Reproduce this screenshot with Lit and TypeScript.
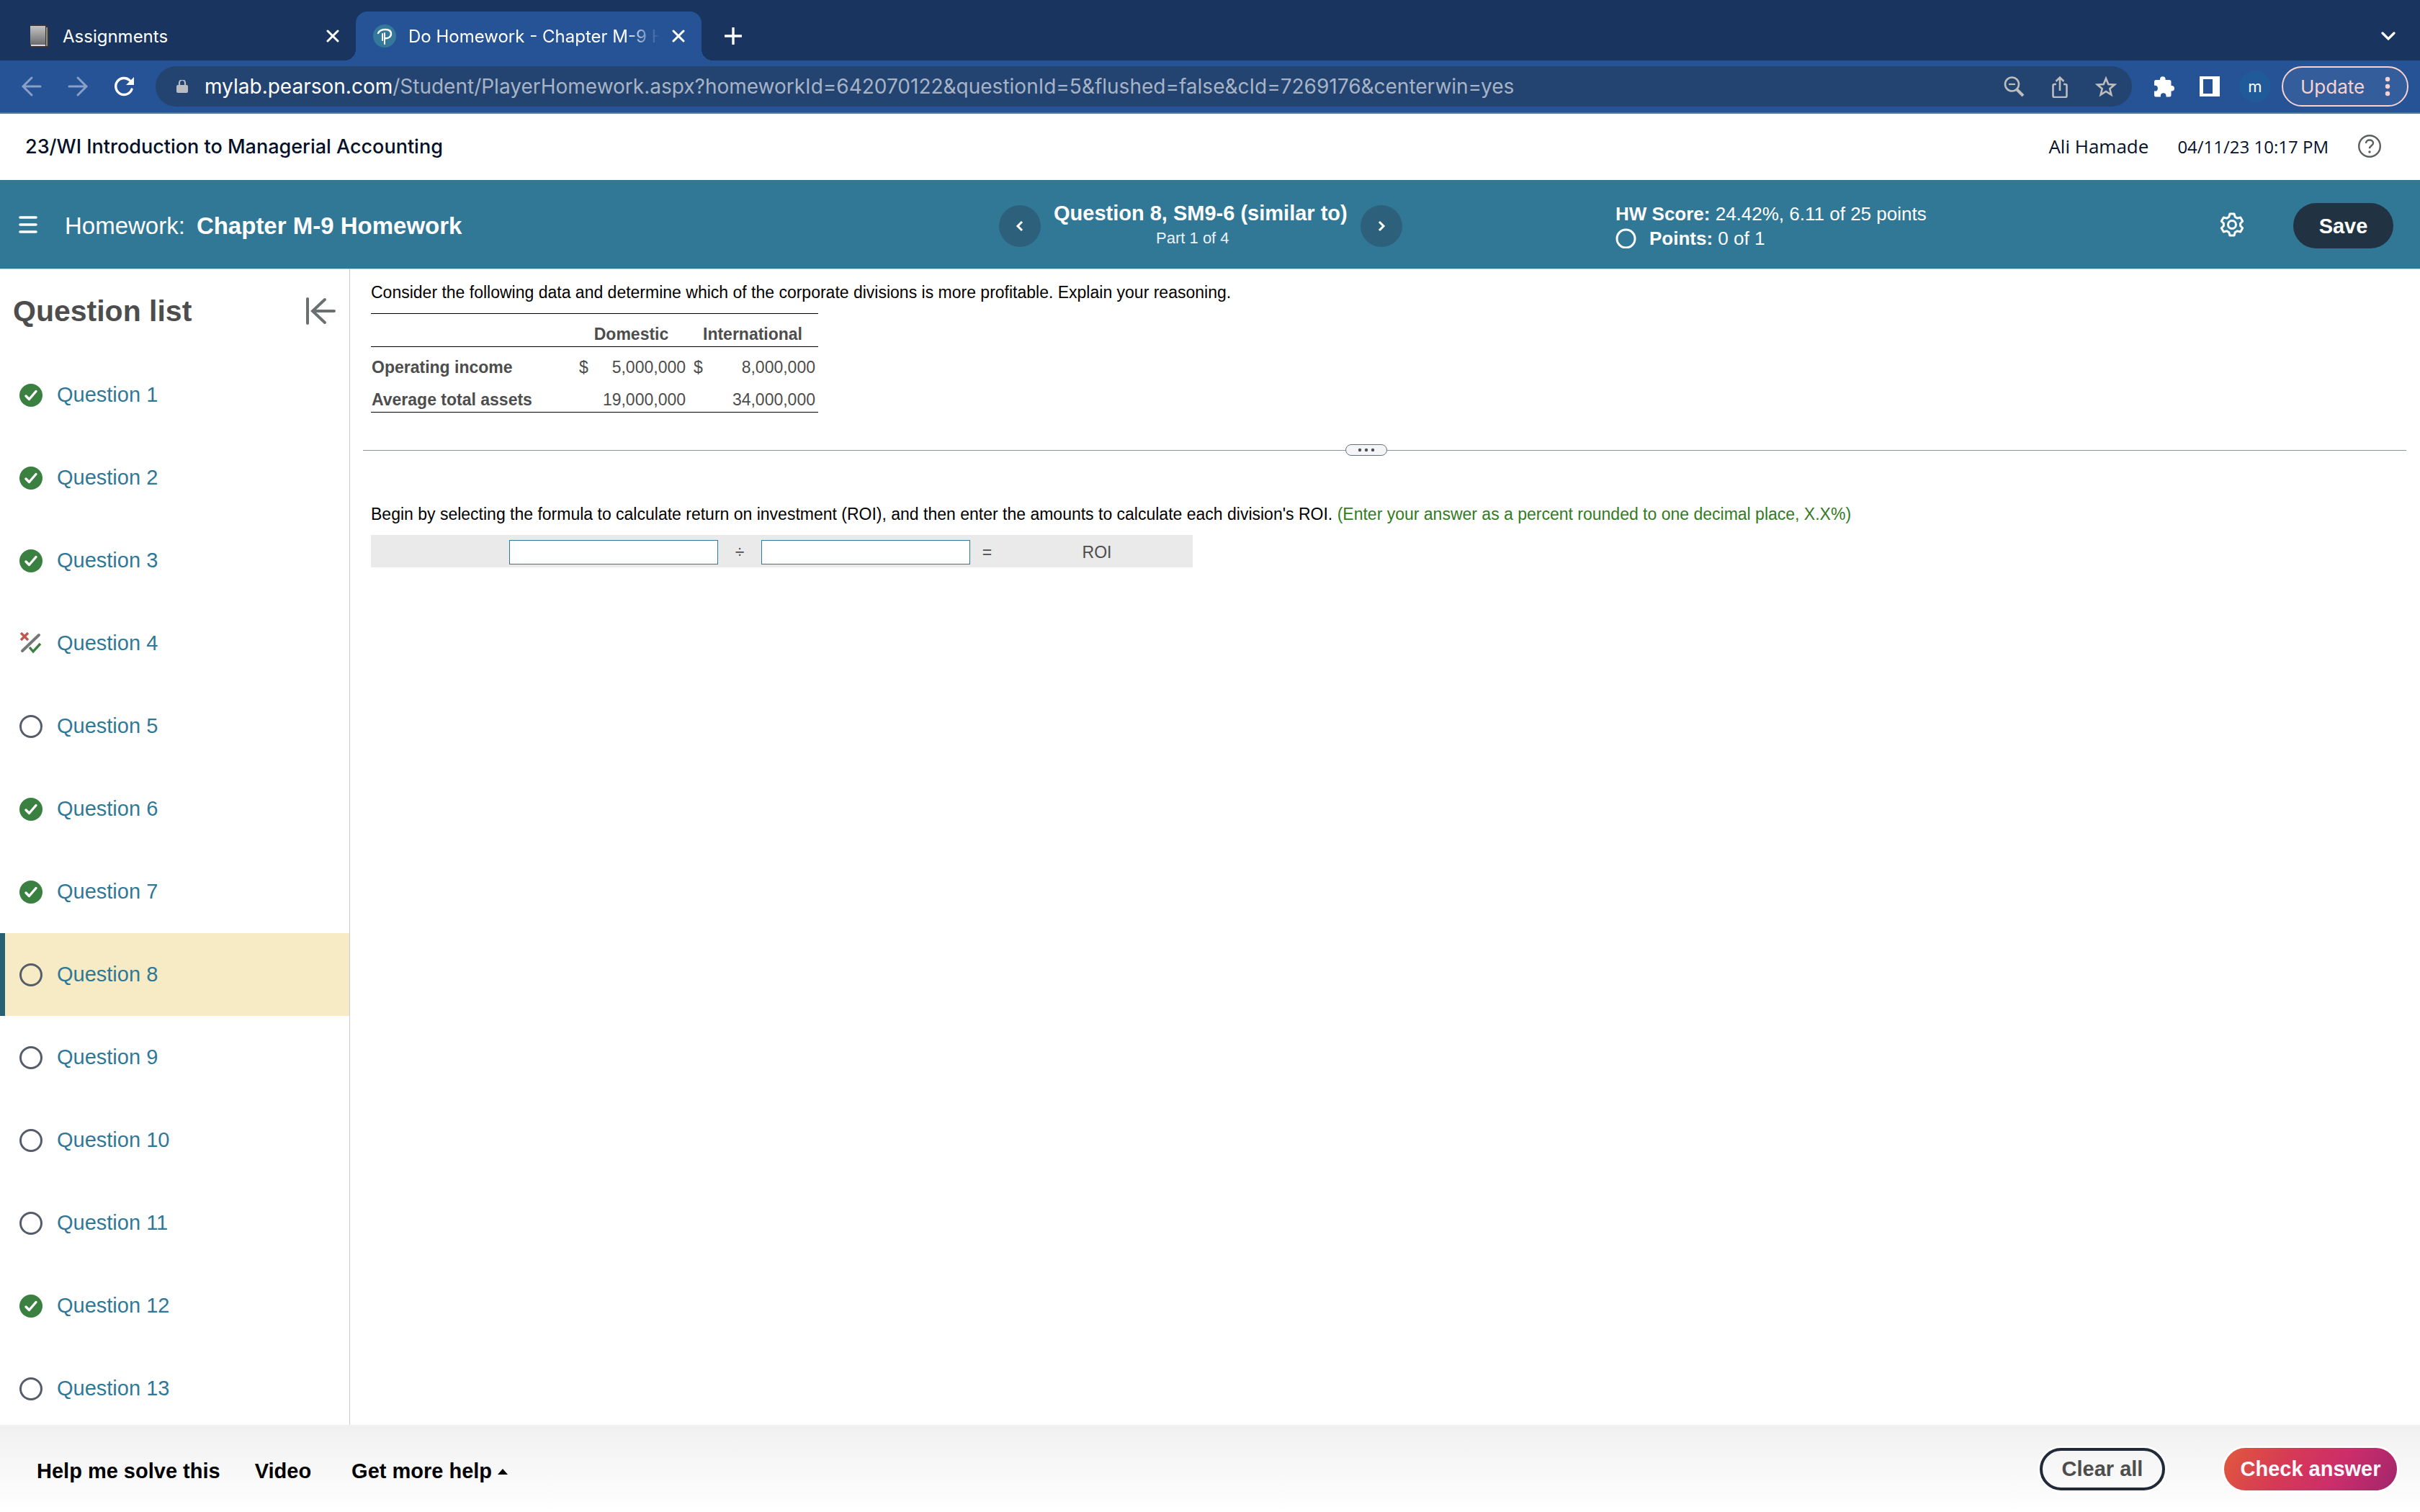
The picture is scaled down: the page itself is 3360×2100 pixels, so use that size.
import { LitElement, html, css, svg, nothing } from "lit";
import { customElement, property } from "lit/decorators.js";
import { classMap } from "lit/directives/class-map.js";

type Status = "correct" | "partial" | "open";

interface Question {
  label: string;
  status: Status;
  active?: boolean;
}

const QUESTIONS: Question[] = [
  { label: "Question 1", status: "correct" },
  { label: "Question 2", status: "correct" },
  { label: "Question 3", status: "correct" },
  { label: "Question 4", status: "partial" },
  { label: "Question 5", status: "open" },
  { label: "Question 6", status: "correct" },
  { label: "Question 7", status: "correct" },
  { label: "Question 8", status: "open", active: true },
  { label: "Question 9", status: "open" },
  { label: "Question 10", status: "open" },
  { label: "Question 11", status: "open" },
  { label: "Question 12", status: "correct" },
  { label: "Question 13", status: "open" },
];

const icon = (size: number, body: unknown) => html`<svg
  width=${size}
  height=${size}
  viewBox="0 0 ${size} ${size}"
  fill="none"
  aria-hidden="true"
>
  ${body}
</svg>`;

const buttonReset = css`
  button {
    appearance: none;
    border: 0;
    padding: 0;
    margin: 0;
    background: none;
    color: inherit;
    font: inherit;
    cursor: pointer;
  }
  svg {
    display: block;
    flex: none;
  }
`;

/* ---------- Browser frame ---------- */

const closeIcon = icon(18, svg`<path d="M2 2 16 16M16 2 2 16" stroke="#fff" stroke-width="3" stroke-linecap="round"/>`);

@customElement("browser-frame")
export class BrowserFrame extends LitElement {
  static styles = [
    buttonReset,
    css`
      :host {
        display: block;
        font-family: Inter, "Liberation Sans", sans-serif;
        color: #fff;
      }
      .tabs {
        display: flex;
        align-items: flex-end;
        height: 84px;
        padding: 0 34px 0 14px;
        box-sizing: border-box;
        background: #19355f;
      }
      .tab {
        display: flex;
        align-items: center;
        gap: 17px;
        flex: 0 1 480px;
        min-width: 0;
        height: 68px;
        padding: 0 23px 0 24px;
        box-sizing: border-box;
        font-size: 24px;
      }
      .tab.current {
        position: relative;
        background: #265396;
        border-radius: 16px 16px 0 0;
      }
      .tab.current::before,
      .tab.current::after {
        content: "";
        position: absolute;
        bottom: 0;
        width: 16px;
        height: 16px;
      }
      .tab.current::before {
        right: 100%;
        background: radial-gradient(circle at 0 0, transparent 16px, #265396 16px);
      }
      .tab.current::after {
        left: 100%;
        background: radial-gradient(circle at 100% 0, transparent 16px, #265396 16px);
      }
      .name {
        flex: 1;
        min-width: 0;
        white-space: nowrap;
      }
      .fade {
        -webkit-mask-image: linear-gradient(to right, #000 86%, transparent);
        mask-image: linear-gradient(to right, #000 86%, transparent);
      }
      .strip-button {
        height: 68px;
        padding: 0 32px;
      }
      .more {
        margin-left: auto;
        height: 68px;
      }
      .toolbar {
        display: flex;
        align-items: center;
        height: 72px;
        padding: 0 16px 0 28px;
        background: #265396;
        border-bottom: 2px solid #4f77b0;
      }
      .nav {
        display: flex;
        gap: 32px;
        padding-right: 28px;
      }
      .address {
        display: flex;
        align-items: center;
        flex: 1;
        min-width: 0;
        height: 56px;
        padding: 0 20px 0 28px;
        box-sizing: border-box;
        border-radius: 28px;
        background: #234470;
      }
      .url {
        flex: 1;
        min-width: 0;
        overflow: hidden;
        margin-left: 22px;
        font-size: 28px;
        line-height: 40px;
        white-space: nowrap;
        color: #a7b3c6;
      }
      .host {
        color: #fff;
      }
      .tools {
        display: flex;
        gap: 32px;
      }
      .extensions {
        display: flex;
        gap: 32px;
        padding: 0 25px 0 28px;
      }
      .avatar {
        width: 44px;
        height: 44px;
        border-radius: 50%;
        background: #205a98;
        font-size: 22px;
        line-height: 42px;
      }
      .update {
        display: flex;
        align-items: center;
        justify-content: space-between;
        width: 176px;
        height: 56px;
        margin-left: 15px;
        padding: 0 23px 0 24px;
        box-sizing: border-box;
        border: 2px solid #f7d3d0;
        border-radius: 28px;
        background: #335d9b;
        color: #f7d3d0;
        font-size: 26px;
      }
    `,
  ];

  render() {
    return html`
      <div class="tabs" role="tablist">
        <div class="tab" role="tab">
          ${icon(32, svg`
            <defs><linearGradient id="cover" x1="0" y1="0" x2="0" y2="1"><stop stop-color="#c4c4c4"/><stop offset="1" stop-color="#6c6c6c"/></linearGradient></defs>
            <path d="M4 0h20l6 4v28H4z" fill="#3a3436"/>
            <path d="M4 2h21v26H4z" fill="url(#cover)"/>
            <path d="M27 4v26" stroke="#8e8e8e" stroke-width="2"/>
            <path d="M5 29h20" stroke="#d5d8ea" stroke-width="2"/>`)}
          <span class="name">Assignments</span>
          <button aria-label="Close Assignments">${closeIcon}</button>
        </div>
        <div class="tab current" role="tab" aria-selected="true">
          ${icon(32, svg`
            <circle cx="16" cy="16" r="16" fill="#35799a"/>
            <path d="M7 12c2-4 6-5 10-5 5 0 8 2 8 6s-4 7-9 6" stroke="#fff" stroke-width="2.4" stroke-linecap="round"/>
            <path d="M13 13v9M16 12v15" stroke="#fff" stroke-width="2" stroke-linecap="round"/>`)}
          <span class="name fade">Do Homework - Chapter M-9 H</span>
          <button aria-label="Close Do Homework">${closeIcon}</button>
        </div>
        <button class="strip-button" aria-label="New tab">
          ${icon(24, svg`<path d="M12 1v22M1 12h22" stroke="#fff" stroke-width="3.4" stroke-linecap="round"/>`)}
        </button>
        <button class="more" aria-label="Search tabs">
          ${icon(20, svg`<path d="m2 6 8 8 8-8" stroke="#fff" stroke-width="3.2" stroke-linecap="round"/>`)}
        </button>
      </div>
      <div class="toolbar">
        <div class="nav">
          <button aria-label="Back">
            ${icon(32, svg`<path d="M28 16H5M16 4 4 16l12 12" stroke="#8a9fc7" stroke-width="3" stroke-linecap="round"/>`)}
          </button>
          <button aria-label="Forward">
            ${icon(32, svg`<path d="M4 16h23M16 4l12 12-12 12" stroke="#8a9fc7" stroke-width="3" stroke-linecap="round"/>`)}
          </button>
          <button aria-label="Reload">
            ${icon(32, svg`<path d="M27 20a11.5 11.5 0 1 1-3-12.5" stroke="#fff" stroke-width="3.4" stroke-linecap="round"/><path d="M30 3v11H19z" fill="#fff"/>`)}
          </button>
        </div>
        <div class="address">
          ${icon(18, svg`<path d="M5 7V3a4 4 0 0 1 8 0v4" stroke="#b9bcc0" stroke-width="2.2" transform="translate(0 1)"/><rect x="1" y="7" width="16" height="11" rx="2" fill="#b9bcc0"/>`)}
          <span class="url"
            ><span class="host">mylab.pearson.com</span
            >/Student/PlayerHomework.aspx?homeworkId=642070122&amp;questionId=5&amp;flushed=false&amp;cId=7269176&amp;centerwin=yes</span
          >
          <div class="tools">
            <button aria-label="Zoom">
              ${icon(32, svg`<circle cx="13.5" cy="13" r="9.5" stroke="#bdbdbd" stroke-width="2.6"/><path d="M9 13h9" stroke="#bdbdbd" stroke-width="2.2"/><path d="m20 20 9 9" stroke="#bdbdbd" stroke-width="4"/>`)}
            </button>
            <button aria-label="Share">
              ${icon(32, svg`<path d="M11 13H8.5a2 2 0 0 0-2 2v14a2 2 0 0 0 2 2h15a2 2 0 0 0 2-2V15a2 2 0 0 0-2-2H21M16 22V4M10.5 9 16 3.5 21.5 9" stroke="#bdbdbd" stroke-width="2.6"/>`)}
            </button>
            <button aria-label="Bookmark">
              ${icon(32, svg`<path d="m16 5 3.3 8 8.7.6-6.7 5.6 2.1 8.4L16 23l-7.4 4.6 2.1-8.4L4 13.6l8.7-.6z" stroke="#bdbdbd" stroke-width="2.6"/>`)}
            </button>
          </div>
        </div>
        <div class="extensions">
          <button aria-label="Extensions">
            ${icon(32, svg`<path d="M11 6a3.8 3.8 0 0 1 7.6 0v1H24a2.5 2.5 0 0 1 2.500 2.500V15h.7a3.800 3.800 0 0 1 0 7.600h-.7V28a2.500 2.500 0 0 1-2.500 2.500h-4.500V29a3.800 3.800 0 0 0-7.600 0v1.500H5.500A2.500 2.500 0 0 1 3 28v-5.400h1a3.900 3.900 0 0 0 0-7.800H3V9.500A2.500 2.500 0 0 1 5.500 7H11z" fill="#fff"/>`)}
          </button>
          <button aria-label="Side panel">
            ${icon(32, svg`<path d="M2 2h28v28H2z" fill="#fff"/><path d="M7 6h13v20H7z" fill="#265396"/>`)}
          </button>
        </div>
        <button class="avatar" aria-label="Profile">m</button>
        <button class="update">
          Update
          <svg width="8" height="28" viewBox="0 0 8 28" fill="#f7d3d0" aria-hidden="true">
            <circle cx="4" cy="4" r="3.2" /><circle cx="4" cy="14" r="3.2" /><circle cx="4" cy="24" r="3.2" />
          </svg>
        </button>
      </div>
    `;
  }
}

/* ---------- Question list ---------- */

const statusIcon = (status: Status) => {
  if (status === "correct")
    return icon(32, svg`<circle cx="16" cy="16" r="16" fill="#3a8040"/><path d="m9 17 4.5 4.5 9.5-11" stroke="#fff" stroke-width="3.4" stroke-linecap="round" stroke-linejoin="round"/>`);
  if (status === "partial")
    return icon(32, svg`<path d="m2 1 10 10M12 1 2 11" stroke="#c25650" stroke-width="3.4"/><path d="M4 26 27 4" stroke="#777" stroke-width="4" stroke-linecap="round"/><path d="m14 21 5 6 10-11" stroke="#3a8040" stroke-width="3.4"/>`);
  return icon(32, svg`<circle cx="16" cy="16" r="14.5" stroke="#555d6b" stroke-width="3"/>`);
};

@customElement("question-list")
export class QuestionList extends LitElement {
  @property({ attribute: false }) questions: Question[] = [];

  static styles = [
    buttonReset,
    css`
      :host {
        display: block;
        overflow: auto;
        scrollbar-width: none;
        border-right: 1px solid #c9cad8;
      }
      .head {
        display: flex;
        align-items: center;
        justify-content: space-between;
        height: 117px;
        padding: 0 18px;
      }
      h2 {
        margin: 0;
        font-size: 41px;
        color: #4d4d4d;
      }
      ul {
        list-style: none;
        margin: 0;
        padding: 0;
      }
      a {
        display: flex;
        align-items: center;
        gap: 20px;
        height: 115px;
        padding-left: 20px;
        border-left: 7px solid transparent;
        font-size: 29px;
        color: #2f7898;
        text-decoration: none;
      }
      a.active {
        border-color: #285f75;
        background: #f6ebc4;
      }
    `,
  ];

  render() {
    return html`
      <div class="head">
        <h2>Question list</h2>
        <button aria-label="Collapse question list">
          <svg width="44" height="40" viewBox="0 0 44 40" fill="none" stroke="#6a7070" stroke-width="4" stroke-linecap="round">
            <path d="M4 2v34M41 19H12M28 3 11 19l17 16" />
          </svg>
        </button>
      </div>
      <ul>
        ${this.questions.map(
          (q) => html`<li>
            <a
              href="#"
              class=${classMap({ active: !!q.active })}
              aria-current=${q.active ? "true" : nothing}
              >${statusIcon(q.status)}<span>${q.label}</span></a
            >
          </li>`,
        )}
      </ul>
    `;
  }
}

/* ---------- Question body ---------- */

@customElement("question-body")
export class QuestionBody extends LitElement {
  static styles = [
    buttonReset,
    css`
      :host {
        display: block;
        min-width: 0;
        overflow: auto;
        padding: 18px 19px 0 18px;
        font-size: 23px;
        line-height: 28px;
        color: #000;
      }
      .block {
        padding-left: 11px;
      }
      p {
        margin: 0 0 15px;
      }
      table {
        border-collapse: separate;
        border-spacing: 0;
        table-layout: fixed;
        width: 621px;
        color: #4d4d4d;
      }
      .label {
        width: 284px;
      }
      .sign {
        width: 34px;
      }
      .amount {
        width: 121px;
      }
      th,
      td {
        height: 45px;
        box-sizing: border-box;
        padding: 0 2px 3px;
        vertical-align: bottom;
        text-align: right;
        white-space: nowrap;
      }
      tbody th {
        padding-left: 1px;
        text-align: left;
      }
      td.first-sign {
        padding-left: 5px;
        text-align: left;
      }
      td.second-sign {
        padding-left: 9px;
        text-align: left;
      }
      td:last-child {
        padding-right: 4px;
      }
      thead th,
      thead td {
        height: 47px;
        text-align: center;
        border-top: 1px solid #000;
        border-bottom: 1px solid #000;
      }
      tbody tr:last-child > * {
        height: 46px;
        border-bottom: 1px solid #000;
      }
      .divider {
        display: flex;
        align-items: center;
        margin: 44px 0 67px;
      }
      .rule {
        height: 1px;
        background: #8b92a8;
      }
      .before {
        flex: 27;
      }
      .after {
        flex: 28;
      }
      .divider button {
        display: flex;
        align-items: center;
        justify-content: center;
        width: 58px;
        height: 16px;
        box-sizing: border-box;
        border: 1px solid #66707f;
        border-radius: 8px;
        background: #f5f5f8;
      }
      .hint {
        color: #317b22;
      }
      .formula {
        display: grid;
        grid-template-columns: 290px 60px 290px 35px 1fr;
        align-items: center;
        width: 1141px;
        max-width: 100%;
        height: 45px;
        padding: 3px 0 0 192px;
        box-sizing: border-box;
        background: #eaeaea;
        color: #4d4d4d;
        text-align: center;
      }
      input {
        width: 100%;
        height: 34px;
        box-sizing: border-box;
        border: 1px solid #2f7898;
        border-radius: 0;
        background: #fff;
        padding: 0 8px;
        font: inherit;
      }
      .equals {
        padding-left: 12px;
      }
      .result {
        padding-left: 8px;
      }
    `,
  ];

  render() {
    return html`
      <div class="block">
        <p>
          Consider the following data and determine which of the corporate divisions is more
          profitable. Explain your reasoning.
        </p>
        <table>
          <colgroup>
            <col class="label" /><col class="sign" /><col class="amount" /><col class="sign" /><col />
          </colgroup>
          <thead>
            <tr>
              <td></td>
              <th colspan="2" scope="colgroup">Domestic</th>
              <th colspan="2" scope="colgroup">International</th>
            </tr>
          </thead>
          <tbody>
            <tr>
              <th scope="row">Operating income</th>
              <td class="first-sign">$</td>
              <td>5,000,000</td>
              <td class="second-sign">$</td>
              <td>8,000,000</td>
            </tr>
            <tr>
              <th scope="row">Average total assets</th>
              <td></td>
              <td>19,000,000</td>
              <td></td>
              <td>34,000,000</td>
            </tr>
          </tbody>
        </table>
      </div>
      <div class="divider">
        <span class="rule before"></span>
        <button aria-label="Resize panes">
          <svg width="24" height="6" viewBox="0 0 24 6" fill="#4a4f5a" aria-hidden="true">
            <circle cx="3" cy="3" r="2.2" /><circle cx="12" cy="3" r="2.2" /><circle cx="21" cy="3" r="2.2" />
          </svg>
        </button>
        <span class="rule after"></span>
      </div>
      <div class="block">
        <p>
          Begin by selecting the formula to calculate return on investment (ROI), and then enter the
          amounts to calculate each division's ROI.
          <span class="hint">(Enter your answer as a percent rounded to one decimal place, X.X%)</span>
        </p>
        <div class="formula">
          <input type="text" aria-label="Numerator" />
          <span>÷</span>
          <input type="text" aria-label="Denominator" />
          <span class="equals">=</span>
          <span class="result">ROI</span>
        </div>
      </div>
    `;
  }
}

/* ---------- Page ---------- */

@customElement("app-root")
export class AppRoot extends LitElement {
  static styles = [
    buttonReset,
    css`
      :host {
        display: flex;
        flex-direction: column;
        height: 100vh;
        overflow: hidden;
        background: #fff;
        font-family: "Liberation Sans", Arial, sans-serif;
      }
      .course {
        display: flex;
        align-items: center;
        height: 92px;
        padding: 0 54px 2px 35px;
        box-sizing: border-box;
        font-family: "Open Sans", sans-serif;
        font-size: 26px;
        color: #05112a;
      }
      .course h1 {
        flex: 1;
        margin: 0;
        font-family: Inter, sans-serif;
        font-size: 27px;
        font-weight: 500;
      }
      .date {
        margin: 0 41px 0 40px;
        font-size: 24px;
      }
      .banner {
        display: grid;
        grid-template-columns: minmax(0, 1387fr) minmax(0, 856fr) minmax(0, 1117fr);
        align-items: center;
        height: 124px;
        padding-top: 4px;
        box-sizing: border-box;
        background: #317897;
        border-bottom: 1px solid #c7cbdc;
        color: #fff;
      }
      .assignment {
        display: flex;
        align-items: center;
        padding-left: 25px;
        font-size: 33px;
      }
      .assignment button,
      .settings {
        padding-bottom: 4px;
      }
      .assignment span {
        margin: 0 16px 0 37px;
      }
      .stepper {
        display: flex;
        align-items: center;
        gap: 18px;
      }
      .round {
        display: grid;
        place-items: center;
        width: 58px;
        height: 58px;
        border-radius: 50%;
        background: #2d607a;
      }
      .current {
        display: flex;
        flex-direction: column;
        gap: 6px;
        padding-bottom: 4px;
        text-align: center;
        font-size: 29px;
        line-height: 32px;
      }
      .part {
        padding-right: 22px;
        font-size: 22px;
        line-height: 26px;
        color: #eaf2f6;
      }
      .status {
        display: flex;
        align-items: center;
        padding-right: 37px;
      }
      .score {
        flex: 1;
        font-size: 26px;
        line-height: 34px;
      }
      .points {
        display: flex;
        align-items: center;
        gap: 18px;
      }
      .save {
        width: 139px;
        height: 63px;
        padding-top: 2px;
        margin-left: 68px;
        border-radius: 32px;
        background: #213343;
        font-size: 29px;
        font-weight: bold;
      }
      .content {
        display: grid;
        grid-template-columns: 486px minmax(0, 1fr);
        grid-template-rows: minmax(0, 1fr);
        flex: 1;
        min-height: 0;
      }
      footer {
        display: flex;
        align-items: center;
        height: 121px;
        padding: 2px 32px 0 51px;
        box-sizing: border-box;
        background: linear-gradient(#f0f0f0, #fff);
        font-size: 29px;
        font-weight: bold;
        color: #000;
      }
      .help {
        display: flex;
        align-items: center;
        flex: 1;
        gap: 48px;
        padding-top: 6px;
      }
      .menu {
        display: flex;
        align-items: center;
        gap: 8px;
        margin-left: 8px;
      }
      .pill {
        height: 59px;
        border-radius: 30px;
        box-shadow: 0 0 0 3px rgba(255, 255, 255, 0.7);
      }
      .clear {
        width: 174px;
        margin-right: 82px;
        border: 4px solid #202a38;
        color: #4d4d4d;
      }
      .check {
        width: 240px;
        background: linear-gradient(120deg, #e05a3c, #d63a55 35%, #cd2d6a 65%, #a0266d);
        color: #fbf7fc;
      }
    `,
  ];

  render() {
    return html`
      <browser-frame></browser-frame>
      <header class="course">
        <h1>23/WI Introduction to Managerial Accounting</h1>
        <span>Ali Hamade</span>
        <span class="date">04/11/23 10:17 PM</span>
        <button aria-label="Help">
          ${icon(32, svg`<circle cx="16" cy="16" r="14.8" stroke="#5c5f5f" stroke-width="2.4"/><path d="M11 12c0-3 2.2-4.5 5-4.5s5 1.7 5 4.2c0 3.6-5 3.6-5 7.6" stroke="#5c5f5f" stroke-width="2.4"/><circle cx="16" cy="24" r="1.7" fill="#5c5f5f"/>`)}
        </button>
      </header>
      <section class="banner">
        <div class="assignment">
          <button aria-label="Menu">
            <svg width="28" height="24" viewBox="0 0 28 24" stroke="#fff" stroke-width="3.6" stroke-linecap="round">
              <path d="M3 2h22M3 12h22M3 22h22" />
            </svg>
          </button>
          <span>Homework:</span><strong>Chapter M-9 Homework</strong>
        </div>
        <nav class="stepper">
          <button class="round" aria-label="Previous question">
            ${icon(18, svg`<path d="m12 3-6 6 6 6" stroke="#fff" stroke-width="3"/>`)}
          </button>
          <div class="current">
            <strong>Question 8, SM9-6 (similar to)</strong>
            <span class="part">Part 1 of 4</span>
          </div>
          <button class="round" aria-label="Next question">
            ${icon(18, svg`<path d="m6 3 6 6-6 6" stroke="#fff" stroke-width="3"/>`)}
          </button>
        </nav>
        <div class="status">
          <div class="score">
            <div><strong>HW Score:</strong> 24.42%, 6.11 of 25 points</div>
            <div class="points">
              ${icon(29, svg`<circle cx="14.5" cy="15.5" r="12.5" stroke="#fff" stroke-width="3"/>`)}
              <span><strong>Points:</strong> 0 of 1</span>
            </div>
          </div>
          <button class="settings" aria-label="Settings">
            ${icon(34, svg`<path d="M14 2h6l1.2 4.2 3.2 1.9 4.3-1.1 3 5.2-3.1 3.1v3.4l3.1 3.1-3 5.2-4.3-1.1-3.2 1.9L20 32h-6l-1.2-4.2-3.2-1.9L5.3 27l-3-5.2 3.1-3.1v-3.4l-3.1-3.1 3-5.2 4.3 1.1 3.2-1.9z" stroke="#fff" stroke-width="3" stroke-linejoin="round"/><circle cx="17" cy="17" r="5.5" stroke="#fff" stroke-width="3"/>`)}
          </button>
          <button class="save">Save</button>
        </div>
      </section>
      <div class="content">
        <question-list .questions=${QUESTIONS}></question-list>
        <question-body></question-body>
      </div>
      <footer>
        <div class="help">
          <button>Help me solve this</button>
          <button>Video</button>
          <button class="menu">
            Get more help
            <svg width="14" height="8" viewBox="0 0 14 8" aria-hidden="true"><path d="M0 8 7 0l7 8z" fill="#000" /></svg>
          </button>
        </div>
        <button class="pill clear">Clear all</button>
        <button class="pill check">Check answer</button>
      </footer>
    `;
  }
}
